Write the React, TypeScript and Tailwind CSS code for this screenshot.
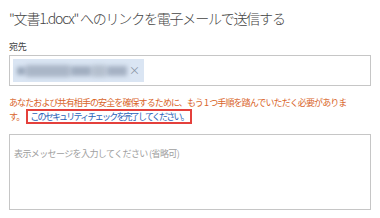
export default function App() {
  return (
    <div
      className="w-[380px] h-[218px] bg-white overflow-hidden pl-[9px] pr-[9px] pt-[7px]"
      style={{ fontFamily: '"Noto Sans CJK JP", "Noto Sans", sans-serif' }}
    >
      <h1 className="text-[14px] leading-[22px] text-[#444] font-light tracking-[-1.2px] whitespace-nowrap">
        "文書1.docx" へのリンクを電子メールで送信する
      </h1>

      <div className="mt-[12px] text-[9px] leading-[12px] text-[#444] tracking-[-0.3px]">宛先</div>

      <div className="mt-[2px] h-[31px] border border-[#c6c6c6] flex items-center pl-[3px]">
        <div className="h-[23px] w-[131px] bg-[#dae5f3] flex items-center relative">
          <div className="ml-[4px] h-[14px] w-[114px] flex items-center gap-[1px] blur-[2px]">
            <div className="h-[8px] w-[8px] bg-[#9aa8bb]" />
            <div className="h-[12px] w-[44px] bg-[#aab6c7]" />
            <div className="h-[10px] w-[20px] bg-[#a1aec0]" />
            <div className="h-[12px] w-[14px] bg-[#b4bfce]" />
            <div className="h-[10px] w-[20px] bg-[#a5b1c3]" />
          </div>
          <span className="absolute right-[4px] top-[3px] text-[11px] leading-[16px] text-[#8a96a6]">×</span>
        </div>
      </div>

      <p className="mt-[10px] text-[9px] leading-[13px] text-[#d9652a] tracking-[-0.9px]">
        あなたおよび共有相手の安全を確保するために、もう 1 つ手順を踏んでいただく必要がありま
        <br />
        す。
        <span className="inline-block border-2 border-solid border-[color:#e4403c] text-[#2a62b8] px-[2px] leading-[11px] ml-[2px] tracking-[-1.8px]">
          このセキュリティ チェックを完了してください。
        </span>
      </p>

      <div className="mt-[10px] h-[76px] border border-[#c6c6c6] pl-[4px] pt-[3px]">
        <span className="text-[9px] leading-[13px] text-[#a0a0a0] tracking-[-0.6px]">
          表示メッセージを入力してください (省略可)
        </span>
      </div>
    </div>
  );
}
